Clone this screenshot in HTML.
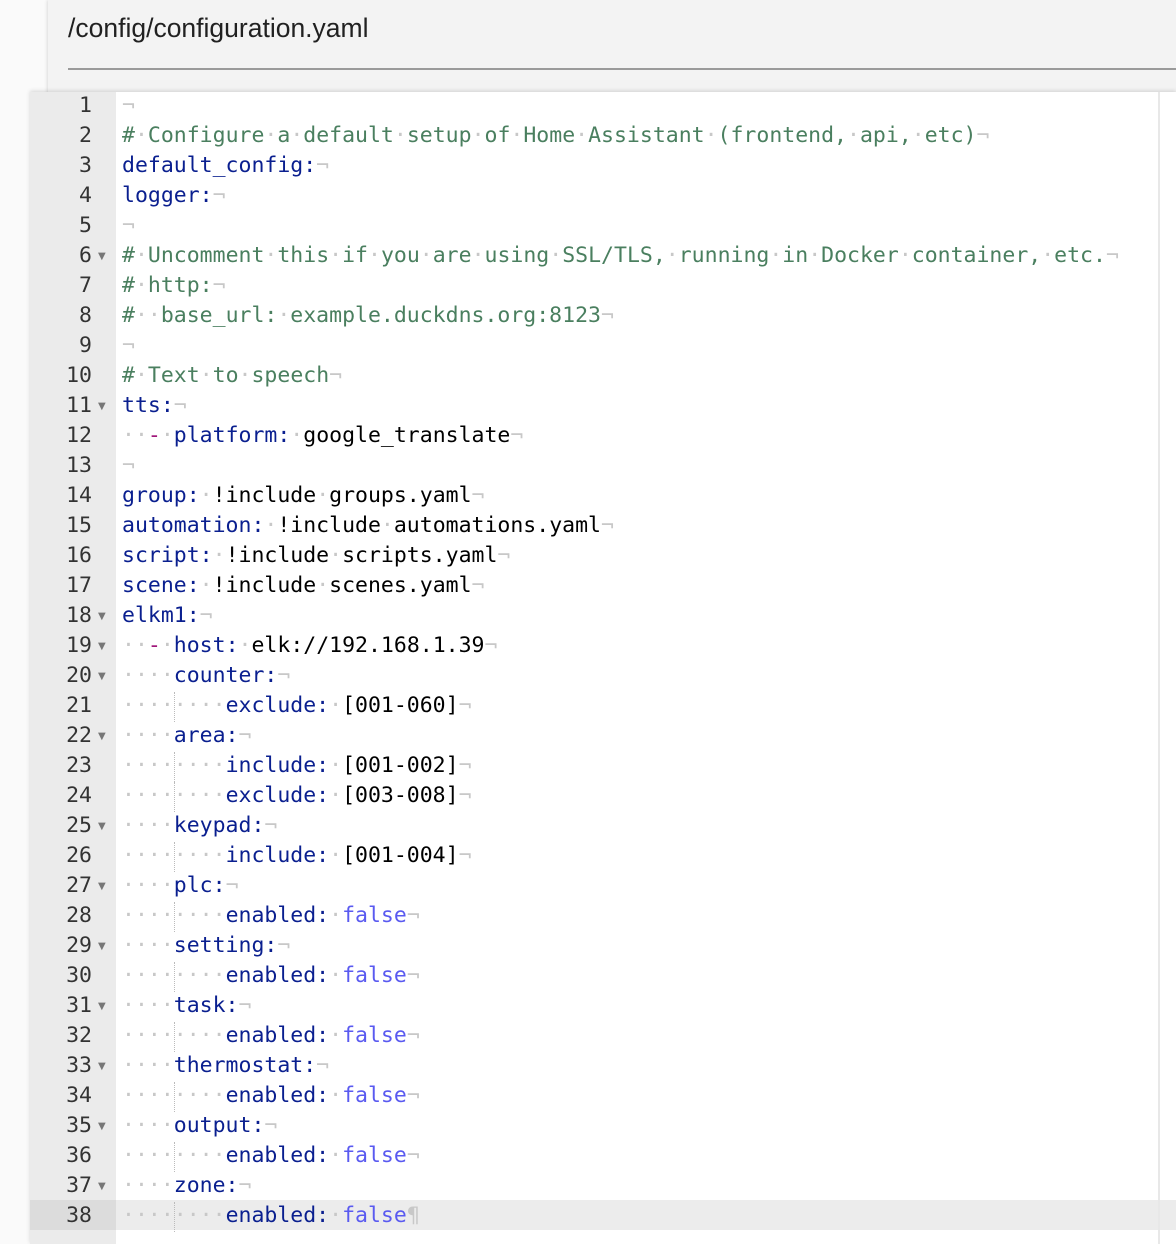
<!DOCTYPE html>
<html><head><meta charset="utf-8"><style>
html,body{margin:0;padding:0;width:1176px;height:1244px;overflow:hidden;background:#fafafa;font-family:"Liberation Sans",sans-serif}
.card{position:absolute;left:48px;top:0;width:1128px;height:1244px;background:#f3f3f3;box-shadow:-1px 0 3px rgba(0,0,0,.12)}
.title{position:absolute;left:20px;top:13px;font-size:26.5px;color:#212121}
.rule{position:absolute;left:20px;right:0;top:68px;height:2px;background:#9a9a9a}
.ed{position:absolute;left:30px;top:92px;width:1146px;height:1152px;background:#fff;box-shadow:0 -1px 4px rgba(0,0,0,.15);overflow:hidden}
.gut{position:absolute;left:0;top:0;width:86px;height:100%;background:#ebebeb}
.pm{position:absolute;left:1128px;top:0;width:2px;height:100%;background:#e8e8e8}
.hl{position:absolute;left:0;top:1108px;width:1146px;height:30px;background:#ececec}
.hlg{position:absolute;left:0;top:1108px;width:86px;height:30px;background:#dcdcdc}
.ln{position:absolute;left:0;top:-1px;width:62px;text-align:right;font-family:"DejaVu Sans Mono",monospace;font-size:21.5px;line-height:30px;color:#333}
.fd{position:absolute;left:68px;top:0;font-size:10px;line-height:30px;color:#777;font-family:"DejaVu Sans",sans-serif}
.code{position:absolute;left:92px;top:-1px;font-family:"DejaVu Sans Mono",monospace;font-size:21.5px;line-height:30px;color:#000}
.code div{height:30px;white-space:pre}
.c{color:#4a7f5f}.k{color:#0a1f8f}.b{color:#5a5af0}.m{color:#a0167a}
i{font-style:normal;color:#c8c8c8}
.g{position:absolute;left:144px;width:0;border-left:1px dotted #bbb;height:30px}
</style></head><body>
<div class="card"><div class="title">/config/configuration.yaml</div><div class="rule"></div></div>
<div class="ed">
<div class="gut"></div><div class="hl"></div><div class="hlg"></div><div class="pm"></div>
<div class="g" style="top:600px"></div><div class="g" style="top:660px"></div><div class="g" style="top:690px"></div><div class="g" style="top:750px"></div><div class="g" style="top:810px"></div><div class="g" style="top:870px"></div><div class="g" style="top:930px"></div><div class="g" style="top:990px"></div><div class="g" style="top:1050px"></div><div class="g" style="top:1110px"></div>
<div class="ln">1<br>2<br>3<br>4<br>5<br>6<br>7<br>8<br>9<br>10<br>11<br>12<br>13<br>14<br>15<br>16<br>17<br>18<br>19<br>20<br>21<br>22<br>23<br>24<br>25<br>26<br>27<br>28<br>29<br>30<br>31<br>32<br>33<br>34<br>35<br>36<br>37<br>38</div>
<div class="fd" style="top:150px">▼</div><div class="fd" style="top:300px">▼</div><div class="fd" style="top:510px">▼</div><div class="fd" style="top:540px">▼</div><div class="fd" style="top:570px">▼</div><div class="fd" style="top:630px">▼</div><div class="fd" style="top:720px">▼</div><div class="fd" style="top:780px">▼</div><div class="fd" style="top:840px">▼</div><div class="fd" style="top:900px">▼</div><div class="fd" style="top:960px">▼</div><div class="fd" style="top:1020px">▼</div><div class="fd" style="top:1080px">▼</div>
<div class="code"><div><i>¬</i></div><div class="c">#<i>·</i>Configure<i>·</i>a<i>·</i>default<i>·</i>setup<i>·</i>of<i>·</i>Home<i>·</i>Assistant<i>·</i>(frontend,<i>·</i>api,<i>·</i>etc)<i>¬</i></div><div><span class="k">default_config:</span><i>¬</i></div><div><span class="k">logger:</span><i>¬</i></div><div><i>¬</i></div><div class="c">#<i>·</i>Uncomment<i>·</i>this<i>·</i>if<i>·</i>you<i>·</i>are<i>·</i>using<i>·</i>SSL/TLS,<i>·</i>running<i>·</i>in<i>·</i>Docker<i>·</i>container,<i>·</i>etc.<i>¬</i></div><div class="c">#<i>·</i>http:<i>¬</i></div><div class="c">#<i>··</i>base_url:<i>·</i>example.duckdns.org:8123<i>¬</i></div><div><i>¬</i></div><div class="c">#<i>·</i>Text<i>·</i>to<i>·</i>speech<i>¬</i></div><div><span class="k">tts:</span><i>¬</i></div><div><i>··</i><span class="m">-</span><i>·</i><span class="k">platform:</span><i>·</i>google_translate<i>¬</i></div><div><i>¬</i></div><div><span class="k">group:</span><i>·</i>!include<i>·</i>groups.yaml<i>¬</i></div><div><span class="k">automation:</span><i>·</i>!include<i>·</i>automations.yaml<i>¬</i></div><div><span class="k">script:</span><i>·</i>!include<i>·</i>scripts.yaml<i>¬</i></div><div><span class="k">scene:</span><i>·</i>!include<i>·</i>scenes.yaml<i>¬</i></div><div><span class="k">elkm1:</span><i>¬</i></div><div><i>··</i><span class="m">-</span><i>·</i><span class="k">host:</span><i>·</i>elk://192.168.1.39<i>¬</i></div><div><i>····</i><span class="k">counter:</span><i>¬</i></div><div><i>········</i><span class="k">exclude:</span><i>·</i>[001-060]<i>¬</i></div><div><i>····</i><span class="k">area:</span><i>¬</i></div><div><i>········</i><span class="k">include:</span><i>·</i>[001-002]<i>¬</i></div><div><i>········</i><span class="k">exclude:</span><i>·</i>[003-008]<i>¬</i></div><div><i>····</i><span class="k">keypad:</span><i>¬</i></div><div><i>········</i><span class="k">include:</span><i>·</i>[001-004]<i>¬</i></div><div><i>····</i><span class="k">plc:</span><i>¬</i></div><div><i>········</i><span class="k">enabled:</span><i>·</i><span class="b">false</span><i>¬</i></div><div><i>····</i><span class="k">setting:</span><i>¬</i></div><div><i>········</i><span class="k">enabled:</span><i>·</i><span class="b">false</span><i>¬</i></div><div><i>····</i><span class="k">task:</span><i>¬</i></div><div><i>········</i><span class="k">enabled:</span><i>·</i><span class="b">false</span><i>¬</i></div><div><i>····</i><span class="k">thermostat:</span><i>¬</i></div><div><i>········</i><span class="k">enabled:</span><i>·</i><span class="b">false</span><i>¬</i></div><div><i>····</i><span class="k">output:</span><i>¬</i></div><div><i>········</i><span class="k">enabled:</span><i>·</i><span class="b">false</span><i>¬</i></div><div><i>····</i><span class="k">zone:</span><i>¬</i></div><div><i>········</i><span class="k">enabled:</span><i>·</i><span class="b">false</span><i>¶</i></div></div>
</div>
</body></html>
